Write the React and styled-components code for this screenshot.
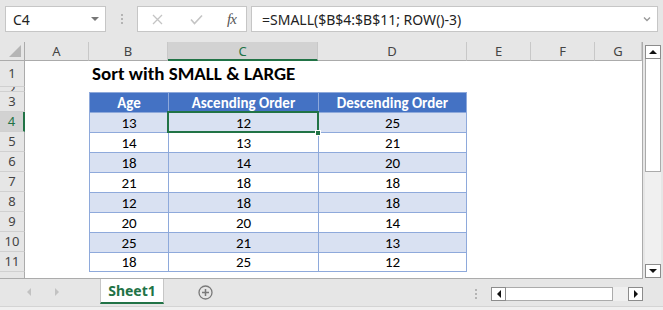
import React from "react";
import styled, { createGlobalStyle } from "styled-components";

const GlobalStyle = createGlobalStyle`
  html, body { margin: 0; padding: 0; background: #e6e6e6; }
  * { box-sizing: border-box; }
`;

const CELL_FONT = `Calibri, Carlito, Lato, "Liberation Sans", sans-serif`;
const UI_FONT = `"Segoe UI", "Noto Sans", "Open Sans", sans-serif`;
const GREEN = "#217346";

const COLS = [25, 64, 79, 150, 149, 64, 64, 47];
const LETTERS = ["A", "B", "C", "D", "E", "F", "G"];

const ages = [13, 14, 18, 21, 12, 20, 25, 18];
const asc = [12, 13, 14, 18, 18, 20, 21, 25];
const desc = [25, 21, 20, 18, 18, 14, 13, 12];

const Window = styled.div`
  width: 663px;
  height: 310px;
  background: #e6e6e6;
  display: flex;
  flex-direction: column;
  overflow: hidden;
  font-family: ${UI_FONT};
`;

/* ---------- formula bar ---------- */

const FormulaBar = styled.div`
  height: 42px;
  flex-shrink: 0;
  display: flex;
  align-items: flex-start;
  padding: 6px 5px 0 5px;
`;

const Box = styled.div`
  height: 26px;
  background: #fff;
  border: 1px solid #c6c6c6;
  display: flex;
  align-items: center;
`;

const NameBox = styled(Box)`
  width: 101px;
  justify-content: space-between;
  padding: 0 6px 0 7px;
  font-size: 14px;
  color: #222;
`;

const Caret = styled.span`
  width: 0;
  height: 0;
  border-left: 4px solid transparent;
  border-right: 4px solid transparent;
  border-top: 4px solid #777;
`;

const Grip = styled.div`
  width: 31px;
  height: 26px;
  display: flex;
  flex-direction: column;
  align-items: center;
  justify-content: center;
  gap: 2px;
`;

const Dot = styled.span`
  width: 2px;
  height: 2px;
  background: #b4b4b4;
`;

const FxBox = styled(Box)`
  width: 110px;
  margin-right: 4px;
  padding-left: 13px;
`;

const IconSlot = styled.span`
  width: ${({ $w }) => $w}px;
  display: flex;
  align-items: center;
  justify-content: ${({ $end }) => ($end ? "flex-end" : "center")};
`;

const Fx = styled.span`
  font-family: "Liberation Serif", serif;
  font-style: italic;
  font-size: 15px;
  color: #555;
  letter-spacing: -1px;
  margin-left: 24px;
`;

const FormulaBox = styled(Box)`
  flex: 1;
  justify-content: space-between;
  padding: 0 6px 0 10px;
  font-size: 14px;
  color: #222;
`;

const Chevron = () => (
  <svg width="8" height="6" viewBox="0 0 8 6">
    <path d="M1 1.5 L4 4.5 L7 1.5" fill="none" stroke="#9a9a9a" strokeWidth="1.4" />
  </svg>
);

/* ---------- sheet ---------- */

const Main = styled.div`
  height: 237px;
  flex-shrink: 0;
  display: flex;
`;

const Sheet = styled.div`
  width: 643px;
  height: 237px;
  background: #fff;
  border-right: 1px solid #ababab;
  border-bottom: 1px solid #ababab;
  display: grid;
  grid-template-columns: ${COLS.map((c) => c + "px").join(" ")};
  grid-template-rows: 19px 26px 5px repeat(9, 20px) 1fr;
`;

const Corner = styled.div`
  background: #e6e6e6;
  border-right: 1px solid #ababab;
  border-bottom: 1px solid #ababab;
  display: flex;
  align-items: flex-end;
  justify-content: flex-end;
  padding: 0 3px 3px 0;
  &::after {
    content: "";
    width: 0;
    height: 0;
    border-left: 12px solid transparent;
    border-bottom: 12px solid #b5b5b5;
  }
`;

const ColHead = styled.div`
  background: ${({ $sel }) => ($sel ? "#d2d2d2" : "#e6e6e6")};
  border-right: 1px solid #c8c8c8;
  border-bottom: ${({ $sel }) => ($sel ? `2px solid ${GREEN}` : "1px solid #ababab")};
  display: flex;
  align-items: center;
  justify-content: center;
  font-size: 13px;
  color: ${({ $sel }) => ($sel ? GREEN : "#444")};
  padding-top: ${({ $sel }) => ($sel ? "1px" : "0")};
`;

const RowHead = styled.div`
  background: ${({ $sel }) => ($sel ? "#d2d2d2" : "#e6e6e6")};
  border-right: ${({ $sel }) => ($sel ? `2px solid ${GREEN}` : "1px solid #ababab")};
  border-bottom: 1px solid #d0d0d0;
  display: flex;
  align-items: center;
  justify-content: center;
  font-size: 13px;
  line-height: ${({ $tiny }) => ($tiny ? "4px" : "1")};
  color: ${({ $sel }) => ($sel ? GREEN : "#444")};
  overflow: hidden;
`;

const Cell = styled.div`
  background: ${({ $bg }) => $bg || "#fff"};
  font-family: ${CELL_FONT};
  font-size: 15px;
  font-weight: ${({ $bold }) => ($bold ? 700 : 400)};
  color: ${({ $color }) => $color || "#000"};
  display: flex;
  align-items: center;
  justify-content: center;
  white-space: nowrap;
  ${({ $table }) =>
    $table &&
    `
    border-left: 1px solid #8ea9db;
    border-top: 1px solid #8ea9db;
  `}
  ${({ $last }) => $last && `border-right: 1px solid #8ea9db;`}
  ${({ $bottom }) => $bottom && `border-bottom: 1px solid #8ea9db;`}
  ${({ $sel }) =>
    $sel &&
    `
    position: relative;
    z-index: 2;
    outline: 2px solid ${GREEN};
    outline-offset: -1px;
  `}
`;

const Title = styled(Cell)`
  grid-column: span 4;
  justify-content: flex-start;
  align-items: flex-end;
  padding: 0 0 2px 3px;
  font-size: 19px;
`;

const Handle = styled.span`
  position: absolute;
  right: -3px;
  bottom: -4px;
  width: 6px;
  height: 6px;
  background: ${GREEN};
  border: 1px solid #fff;
`;

const Filler = styled.div`
  background: ${({ $head }) => ($head ? "#e6e6e6" : "#fff")};
  ${({ $head }) => $head && "border-right: 1px solid #ababab;"}
`;

/* ---------- scrollbars ---------- */

const VScroll = styled.div`
  width: 20px;
  display: flex;
  flex-direction: column;
  padding: 3px 2px 1px 2px;
`;

const ScrollBtn = styled.div`
  width: ${({ $w }) => $w || 16}px;
  height: ${({ $h }) => $h || 14}px;
  background: #fff;
  border: 1px solid #8c8c8c;
  display: flex;
  align-items: center;
  justify-content: center;
  flex-shrink: 0;
`;

const VThumb = styled.div`
  width: 16px;
  height: 113px;
  background: #fff;
  border: 1px solid #ababab;
  border-top: none;
`;

const VTrack = styled.div`
  flex: 1;
  width: 16px;
  background: #f0f0f0;
`;

const Tri = styled.span`
  width: 0;
  height: 0;
  ${({ $dir, $c = "#111", $s = 4 }) =>
    $dir === "up"
      ? `border-left:${$s}px solid transparent;border-right:${$s}px solid transparent;border-bottom:${$s}px solid ${$c};`
      : $dir === "down"
      ? `border-left:${$s}px solid transparent;border-right:${$s}px solid transparent;border-top:${$s}px solid ${$c};`
      : $dir === "left"
      ? `border-top:${$s}px solid transparent;border-bottom:${$s}px solid transparent;border-right:${$s}px solid ${$c};`
      : `border-top:${$s}px solid transparent;border-bottom:${$s}px solid transparent;border-left:${$s}px solid ${$c};`}
`;

/* ---------- tab bar ---------- */

const TabBar = styled.div`
  height: 27px;
  flex-shrink: 0;
  display: flex;
  align-items: flex-start;
`;

const NavArea = styled.div`
  width: 100px;
  height: 25px;
  display: flex;
  align-items: center;
  padding-left: 27px;
  gap: 24px;
`;

const Tab = styled.div`
  width: 64px;
  height: 25px;
  background: #fff;
  border-left: 1px solid #c6c6c6;
  border-right: 1px solid #c6c6c6;
  border-bottom: 2px solid ${GREEN};
  display: flex;
  align-items: center;
  justify-content: center;
  font-size: 14px;
  font-weight: 700;
  color: ${GREEN};
`;

const AddSheet = styled.div`
  margin-left: 34px;
  height: 27px;
  display: flex;
  align-items: center;
  padding-bottom: 1px;
`;

const HScrollArea = styled.div`
  margin-left: auto;
  margin-right: 20px;
  display: flex;
  align-items: center;
  padding-top: 8px;
`;

const HGrip = styled.div`
  display: flex;
  flex-direction: column;
  gap: 2px;
  margin-right: 14px;
`;

const HThumb = styled.div`
  width: 107px;
  height: 14px;
  background: #fff;
  border: 1px solid #ababab;
  border-left: none;
`;

const HTrack = styled.div`
  width: 15px;
  height: 14px;
  background: #f0f0f0;
`;

const StatusStrip = styled.div`
  flex: 1;
  border-top: 1px solid #d4d4d4;
  background: #f0f0f0;
`;

const renderRow = (r) => {
  const cells = [];
  const isTable = r >= 3;
  const idx = r - 4;
  for (let c = 0; c < 7; c++) {
    const key = `${r}-${c}`;
    const col = LETTERS[c];
    if (r === 1 && col === "B") {
      cells.push(
        <Title key={key} $bold>
          Sort with SMALL &amp; LARGE
        </Title>
      );
      c += 3;
      continue;
    }
    if (isTable && (col === "B" || col === "C" || col === "D")) {
      const header = r === 3;
      const band = !header && idx % 2 === 0;
      let text;
      if (header) text = col === "B" ? "Age" : col === "C" ? "Ascending Order" : "Descending Order";
      else text = col === "B" ? ages[idx] : col === "C" ? asc[idx] : desc[idx];
      const sel = r === 4 && col === "C";
      cells.push(
        <Cell
          key={key}
          $table
          $last={col === "D"}
          $bottom={r === 11}
          $bold={header}
          $color={header ? "#fff" : "#000"}
          $bg={header ? "#4472c4" : band ? "#d9e1f2" : "#fff"}
          $sel={sel}
        >
          {text}
          {sel && <Handle />}
        </Cell>
      );
      continue;
    }
    cells.push(<Cell key={key} />);
  }
  return [
    <RowHead key={`h${r}`} $sel={r === 4} $tiny={r === 2}>
      {r}
    </RowHead>,
    ...cells,
  ];
};

export default function App() {
  const rows = [];
  for (let r = 1; r <= 11; r++) rows.push(...renderRow(r));

  return (
    <Window>
      <GlobalStyle />
      <FormulaBar>
        <NameBox>
          C4
          <Caret />
        </NameBox>
        <Grip>
          <Dot />
          <Dot />
          <Dot />
        </Grip>
        <FxBox>
          <IconSlot $w={12}>
            <svg width="11" height="11" viewBox="0 0 11 11">
              <path d="M1 1 L10 10 M10 1 L1 10" stroke="#c4c4c4" strokeWidth="1.3" />
            </svg>
          </IconSlot>
          <IconSlot $w={40} $end>
            <svg width="13" height="11" viewBox="0 0 13 11">
              <path d="M1 5.5 L4.5 9.5 L12 1.5" fill="none" stroke="#c4c4c4" strokeWidth="1.6" />
            </svg>
          </IconSlot>
          <Fx>fx</Fx>
        </FxBox>
        <FormulaBox>
          =SMALL($B$4:$B$11; ROW()-3)
          <Chevron />
        </FormulaBox>
      </FormulaBar>

      <Main>
        <Sheet>
          <Corner />
          {LETTERS.map((l) => (
            <ColHead key={l} $sel={l === "C"}>
              {l}
            </ColHead>
          ))}
          {rows}
          <Filler $head />
          {LETTERS.map((l) => (
            <Filler key={`f${l}`} />
          ))}
        </Sheet>
        <VScroll>
          <ScrollBtn>
            <Tri $dir="up" />
          </ScrollBtn>
          <VThumb />
          <VTrack />
          <ScrollBtn $h={14}>
            <Tri $dir="down" />
          </ScrollBtn>
        </VScroll>
      </Main>

      <TabBar>
        <NavArea>
          <Tri $dir="left" $c="#c2c2c2" />
          <Tri $dir="right" $c="#c2c2c2" />
        </NavArea>
        <Tab>Sheet1</Tab>
        <AddSheet>
          <svg width="15" height="15" viewBox="0 0 15 15">
            <circle cx="7.5" cy="7.5" r="6.5" fill="none" stroke="#7a7a7a" strokeWidth="1.3" />
            <path d="M7.5 4 V11 M4 7.5 H11" stroke="#7a7a7a" strokeWidth="1.5" />
          </svg>
        </AddSheet>
        <HScrollArea>
          <HGrip>
            <Dot />
            <Dot />
            <Dot />
          </HGrip>
          <ScrollBtn $w={15}>
            <Tri $dir="left" />
          </ScrollBtn>
          <HThumb />
          <HTrack />
          <ScrollBtn $w={15}>
            <Tri $dir="right" />
          </ScrollBtn>
        </HScrollArea>
      </TabBar>
      <StatusStrip />
    </Window>
  );
}
